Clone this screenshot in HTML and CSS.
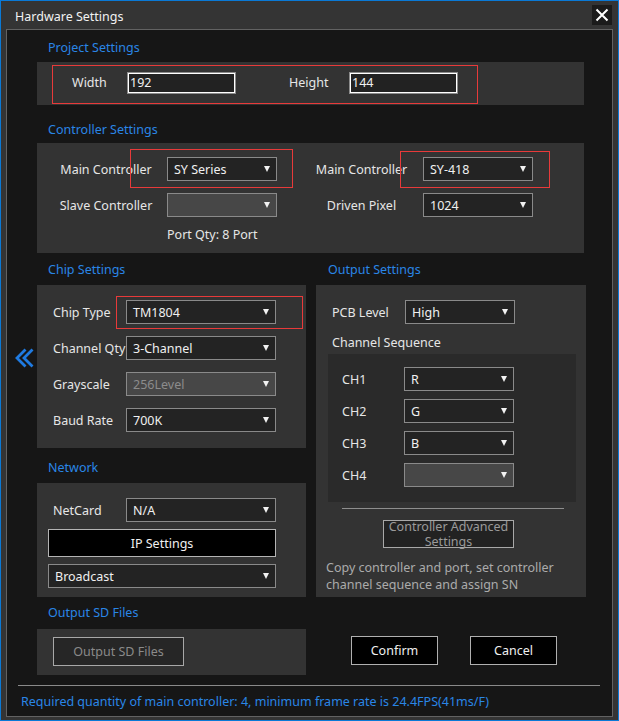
FILE: index.html
```html
<!DOCTYPE html>
<html>
<head>
<meta charset="utf-8">
<title>Hardware Settings</title>
<link rel="stylesheet" href="styles.css">
</head>
<body>
<div class="window">
  <div class="titlebar">
    <div class="title">Hardware Settings</div>
    <div class="close">
      <svg width="20" height="20" viewBox="0 0 20 20"><path d="M4.5 4.5 L15.5 15.5 M15.5 4.5 L4.5 15.5" stroke="#fff" stroke-width="2" fill="none"/></svg>
    </div>
  </div>
  <div class="client">
    <div class="top">
      <div class="heading h-project">Project Settings</div>
      <div class="panel panel-project">
        <div class="redbox">
          <span class="plabel">Width</span>
          <div class="pinput">192</div>
          <span class="plabel plabel2">Height</span>
          <div class="pinput">144</div>
        </div>
      </div>

      <div class="heading h-ctrl">Controller Settings</div>
      <div class="panel panel-ctrl">
        <div class="ctrl-grid">
          <span class="clabel">Main Controller</span>
          <div class="select w110 hl">
            <span>SY Series</span>
            <span class="mark mark-a"></span>
          </div>
          <span class="clabel c4">Main Controller</span>
          <div class="select w110 hl">
            <span>SY-418</span>
            <span class="mark mark-b"></span>
          </div>
          <span class="clabel">Slave Controller</span>
          <div class="select w110 disabled"><span></span></div>
          <span class="clabel c4">Driven Pixel</span>
          <div class="select w110"><span>1024</span></div>
        </div>
        <div class="portqty">Port Qty: 8 Port</div>
      </div>
    </div>

    <div class="cols">
      <div class="gutter">
        <svg class="chev" width="20" height="20" viewBox="0 0 20 20"><path d="M11.5 1.5 L3 10 L11.5 18.5 M18.5 1.5 L10 10 L18.5 18.5" stroke="#1f7be2" stroke-width="2.8" fill="none"/></svg>
      </div>
      <div class="colL">
        <div class="heading h-chip">Chip Settings</div>
        <div class="panel panel-chip">
          <div class="row">
            <span class="rlabel">Chip Type</span>
            <div class="select w150 hl"><span>TM1804</span><span class="mark mark-c"></span></div>
          </div>
          <div class="row">
            <span class="rlabel">Channel Qty</span>
            <div class="select w150"><span>3-Channel</span></div>
          </div>
          <div class="row">
            <span class="rlabel">Grayscale</span>
            <div class="select w150 disabled"><span>256Level</span></div>
          </div>
          <div class="row">
            <span class="rlabel">Baud Rate</span>
            <div class="select w150"><span>700K</span></div>
          </div>
        </div>

        <div class="heading h-net">Network</div>
        <div class="panel panel-net">
          <div class="row">
            <span class="rlabel net-label">NetCard</span>
            <div class="select w150"><span>N/A</span></div>
          </div>
          <div class="btn ipbtn">IP Settings</div>
          <div class="select w228"><span>Broadcast</span></div>
        </div>

        <div class="heading h-sd">Output SD Files</div>
        <div class="panel panel-sd">
          <div class="btn sdbtn">Output SD Files</div>
        </div>
      </div>

      <div class="colR">
        <div class="heading h-out">Output Settings</div>
        <div class="panel panel-out">
          <div class="row pcb-row">
            <span class="rlabel">PCB Level</span>
            <div class="select w110"><span>High</span></div>
          </div>
          <div class="seq-label">Channel Sequence</div>
          <div class="subpanel">
            <div class="row"><span class="chlabel">CH1</span><div class="select w110"><span>R</span></div></div>
            <div class="row"><span class="chlabel">CH2</span><div class="select w110"><span>G</span></div></div>
            <div class="row"><span class="chlabel">CH3</span><div class="select w110"><span>B</span></div></div>
            <div class="row"><span class="chlabel">CH4</span><div class="select w110 disabled"><span></span></div></div>
          </div>
          <div class="sep"></div>
          <div class="btn advbtn">Controller Advanced<br>Settings</div>
          <div class="copy">Copy controller and port, set controller<br>channel sequence and assign SN</div>
        </div>
        <div class="btnrow">
          <div class="btn okbtn">Confirm</div>
          <div class="btn okbtn">Cancel</div>
        </div>
      </div>
    </div>

    <div class="footsep"></div>
    <div class="status">Required quantity of main controller: 4, minimum frame rate is 24.4FPS(41ms/F)</div>
  </div>
</div>
</body>
</html>
```

FILE: styles.css
```css
html, body {
  margin: 0;
  padding: 0;
  background: #343434;
}

.window {
  width: 619px;
  height: 721px;
  box-sizing: border-box;
  border: 1px solid #0a79d6;
  background: #343434;
  display: flex;
  flex-direction: column;
  font-family: "Noto Sans", "Open Sans", sans-serif;
  font-size: 12.5px;
  color: #e6e6e6;
}

.titlebar {
  height: 28px;
  flex: none;
  display: flex;
  align-items: flex-start;
  justify-content: space-between;
  padding: 0 6px 0 14px;
  box-sizing: border-box;
}

.title {
  margin-top: 3px;
  line-height: 26px;
  color: #f2f2f2;
}

.close {
  width: 20px;
  height: 20px;
  margin-top: 4px;
  background: #1b1b1b;
  display: flex;
}

.client {
  flex: 1;
  margin: 0 5px 3px 5px;
  border: 1px solid #626262;
  background: #161616;
  display: flex;
  flex-direction: column;
  min-height: 0;
}

.top {
  padding-left: 30px;
}

.heading {
  height: 20px;
  line-height: 20px;
  padding-left: 11px;
  color: #2a86e6;
}

.panel {
  background: #333333;
  box-sizing: border-box;
}

/* Project */
.h-project { margin-top: 8px; margin-bottom: 4px; }

.panel-project {
  width: 547px;
  height: 43px;
  padding: 3px 0 0 15px;
}

.redbox {
  border: 1px solid #e83a3a;
  width: 426px;
  height: 39px;
  box-sizing: border-box;
  display: flex;
  align-items: flex-start;
  padding: 6px 0 0 19px;
}

.plabel {
  width: 55px;
  line-height: 22px;
}

.plabel2 {
  margin-left: 53px;
  width: 60px;
}

.pinput {
  width: 109px;
  height: 22px;
  box-sizing: border-box;
  border: 1px solid #8c8c8c;
  box-shadow: inset 0 0 0 1px #ffffff;
  background: #222222;
  padding-left: 2px;
  line-height: 20px;
  color: #f0f0f0;
}

/* Controller */
.h-ctrl { margin-top: 15px; margin-bottom: 3px; }

.panel-ctrl {
  width: 547px;
  height: 110px;
  padding: 14px 0 0 8px;
}

.ctrl-grid {
  display: grid;
  grid-template-columns: 122px 110px 23px 123px 110px;
  grid-auto-rows: 24px;
  row-gap: 12px;
  align-items: center;
}

.clabel {
  text-align: center;
  grid-column: 1;
}

.ctrl-grid .select { grid-column: 2; }
.ctrl-grid .c4 { grid-column: 4; }
.ctrl-grid .c4 + .select { grid-column: 5; }

.portqty {
  margin-top: 8px;
  padding-left: 122px;
  line-height: 20px;
}

/* Select */
.select {
  position: relative;
  height: 24px;
  box-sizing: border-box;
  border: 1px solid #8a8a8a;
  background: #232323;
  display: flex;
  align-items: center;
  justify-content: space-between;
  padding: 0 6px 0 6px;
  color: #f0f0f0;
}

.select::after {
  content: "";
  width: 0;
  height: 0;
  border-left: 3px solid transparent;
  border-right: 3px solid transparent;
  border-top: 6px solid #f2f2f2;
}

.select.disabled {
  background: #474747;
  color: #8c8c8c;
}

.w110 { width: 110px; }
.w150 { width: 150px; }
.w228 { width: 228px; }

.mark {
  position: absolute;
  border: 1px solid #e83a3a;
  box-sizing: border-box;
  pointer-events: none;
}

.mark-a { left: -38px; top: -9px; width: 163px; height: 39px; }
.mark-b { left: -24px; top: -7px; width: 150px; height: 37px; }
.mark-c { left: -11px; top: -5px; width: 187px; height: 33px; }

/* Columns */
.cols {
  display: flex;
  margin-top: 7px;
}

.gutter {
  width: 30px;
  flex: none;
}

.chev {
  display: block;
  margin: 88px 0 0 7px;
}

.colL {
  width: 269px;
  flex: none;
}

.colR {
  width: 270px;
  flex: none;
  margin-left: 10px;
}

.row {
  display: flex;
  align-items: center;
  height: 24px;
}

.rlabel {
  width: 73px;
  flex: none;
}

.h-chip { margin-bottom: 5px; }

.panel-chip {
  height: 163px;
  padding: 15px 0 0 16px;
  display: flex;
  flex-direction: column;
  gap: 12px;
}

.h-net { margin-top: 10px; margin-bottom: 5px; }

.panel-net {
  height: 114px;
  padding: 15px 0 0 11px;
  display: flex;
  flex-direction: column;
  gap: 7px;
}

.net-label {
  margin-left: 5px;
}

.btn {
  box-sizing: border-box;
  display: flex;
  align-items: center;
  justify-content: center;
  text-align: center;
}

.ipbtn {
  width: 228px;
  height: 28px;
  background: #000000;
  border: 1px solid #b4b4b4;
  color: #f0f0f0;
}

.h-sd { margin-top: 6px; margin-bottom: 6px; }

.panel-sd {
  height: 46px;
  padding: 8px 0 0 16px;
}

.sdbtn {
  width: 131px;
  height: 29px;
  background: #262626;
  border: 1px solid #a8a8a8;
  color: #8a8a8a;
}

/* Output settings */
.h-out { margin-bottom: 5px; padding-left: 12px; }

.panel-out {
  height: 312px;
  padding: 15px 0 0 12px;
}

.pcb-row { padding-left: 4px; }

.seq-label {
  margin-top: 9px;
  line-height: 20px;
  padding-left: 4px;
}

.subpanel {
  margin-top: 1px;
  width: 248px;
  height: 148px;
  box-sizing: border-box;
  background: #2a2a2a;
  padding: 13px 0 0 14px;
  display: flex;
  flex-direction: column;
  gap: 8px;
}

.chlabel {
  width: 62px;
  flex: none;
}

.sep {
  margin: 6px 0 0 14px;
  width: 222px;
  height: 1px;
  background: #8e8e8e;
}

.advbtn {
  margin: 11px 0 0 55px;
  width: 131px;
  height: 28px;
  background: #222222;
  border: 1px solid #a8a8a8;
  color: #9a9a9a;
  line-height: 15px;
}

.copy {
  margin: 11px 0 0 -2px;
  line-height: 17px;
  color: #ababab;
}

.btnrow {
  display: flex;
  margin-top: 39px;
  padding-left: 35px;
  gap: 32px;
}

.okbtn {
  width: 87px;
  height: 29px;
  background: #000000;
  border: 1px solid #b0b0b0;
  color: #f0f0f0;
}

.footsep {
  margin: 10px 0 0 11px;
  width: 582px;
  height: 1px;
  background: #8a8a8a;
}

.status {
  margin-top: 6px;
  padding-left: 14px;
  line-height: 20px;
  color: #2a86e6;
}
```
